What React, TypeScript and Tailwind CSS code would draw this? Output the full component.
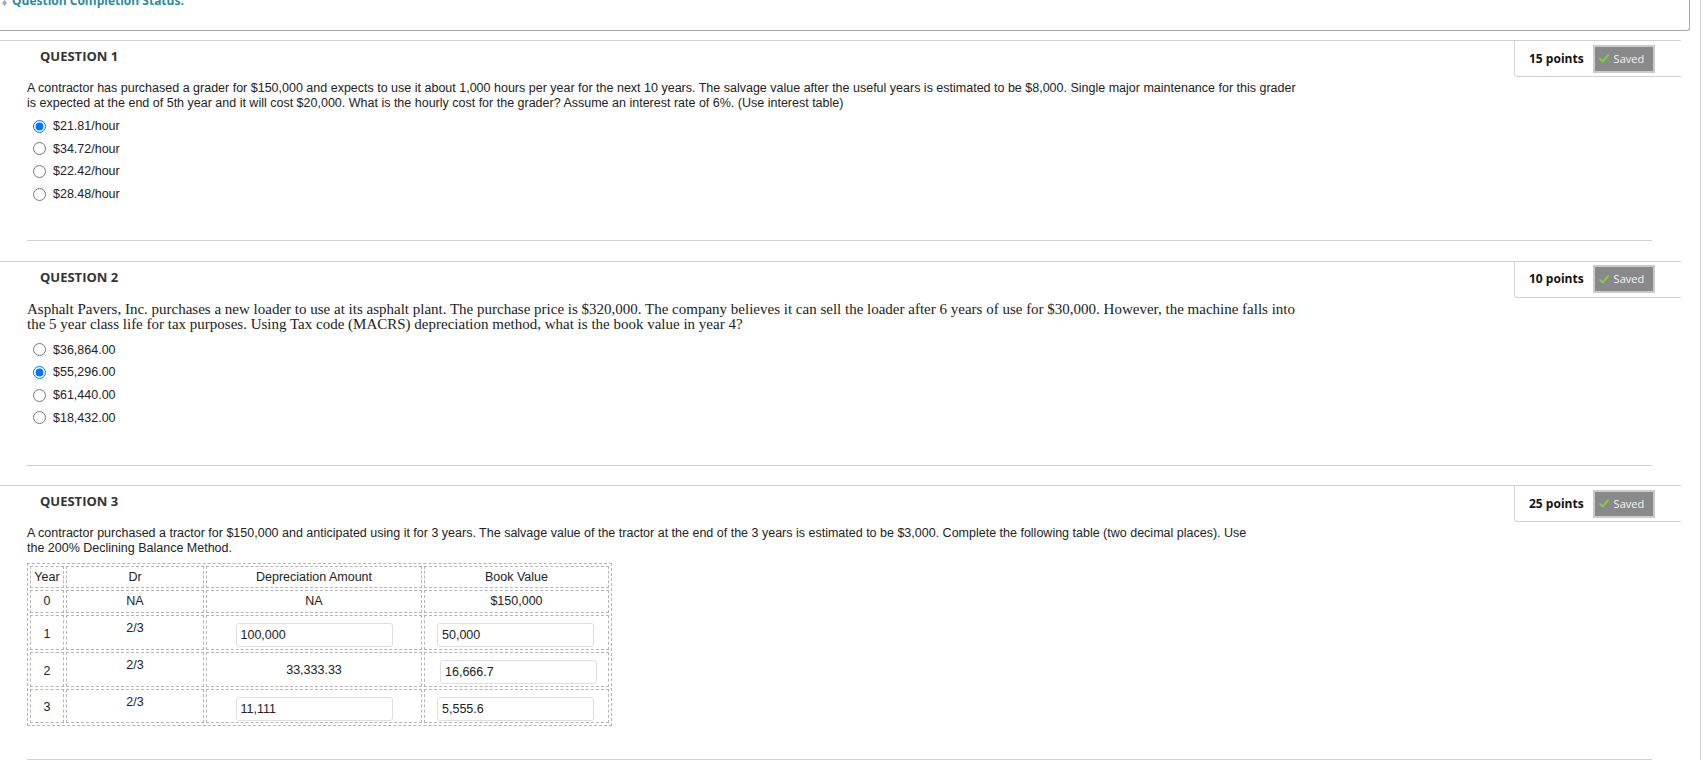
const sans = "font-['Liberation_Sans',Arial,sans-serif]"
const open = "font-['Open_Sans','Liberation_Sans',sans-serif]"

function Check() {
  return (
    <svg width="10" height="9" viewBox="0 0 10 9" className="shrink-0">
      <path d="M1 4.8 L3.8 7.5 L9 1.2" fill="none" stroke="#7ccf3a" strokeWidth="2" strokeLinecap="round" />
    </svg>
  )
}

function QuestionHeader({ n, points }: { n: number; points: number }) {
  return (
    <div className="flex h-[37px] border-t border-[#d2d2d2]">
      <div className={`flex-1 pl-[40px] pt-[7px] text-[13px] font-bold leading-[16px] text-[#333] ${open}`}>
        QUESTION {n}
      </div>
      <div className="flex h-[36px] w-[167px] items-center rounded-bl-[4px] border-b border-l border-[#d2d2d2] pl-[14px]">
        <span className={`text-[12px] font-bold leading-[16px] text-[#111] ${open}`}>{points} points</span>
        <span className="ml-[9px] flex h-[28px] w-[62px] items-center gap-[5px] border-2 border-[#cacaca] bg-[#898989] pl-[4px]">
          <Check />
          <span className={`text-[11px] leading-[14px] text-[#f4f4f4] ${open}`}>Saved</span>
        </span>
      </div>
    </div>
  )
}

function Options({ items, checked }: { items: string[]; checked: number }) {
  return (
    <div className="flex flex-col">
      {items.map((item, i) => (
        <label key={item} className="flex h-[22.67px] items-center text-[12.5px] text-[#222]">
          <input
            type="radio"
            readOnly
            checked={i === checked}
            className="m-0 ml-[6px] mr-[7px] h-[13px] w-[13px] accent-[#0075ff]"
          />
          {item}
        </label>
      ))}
    </div>
  )
}

function Separator({ top }: { top: string }) {
  return <div className={`ml-[27px] w-[1625px] border-t border-[#d2d2d2] ${top}`} />
}

const cell = 'border border-dashed border-[#b4b4b4] p-0 text-center'

function InputBox({ value, className = '' }: { value: string; className?: string }) {
  return (
    <input
      readOnly
      defaultValue={value}
      className={`block h-[24px] w-[157px] rounded-[3px] border border-[#dedede] bg-white px-[4px] text-[12.5px] text-[#222] outline-none ${className}`}
    />
  )
}

function DepTable() {
  const rows = [
    { year: '1', dep: <InputBox value="100,000" className="mx-auto" />, bv: <InputBox value="50,000" className="ml-[12px]" />, h: 'h-[35px]', depText: false },
    { year: '2', dep: '33,333.33', bv: <InputBox value="16,666.7" className="ml-[15px]" />, h: 'h-[35px]', depText: true },
    { year: '3', dep: <InputBox value="11,111" className="mx-auto" />, bv: <InputBox value="5,555.6" className="ml-[12px]" />, h: 'h-[34px]', depText: false },
  ]

  return (
    <table className="table-fixed border-separate border-spacing-[2px] border border-dashed border-[#b4b4b4] text-[12.5px] leading-[15px] text-[#222]">
      <tbody>
        <tr className="h-[22px]">
          <td className={`${cell} w-[34px]`}>Year</td>
          <td className={`${cell} w-[138px]`}>Dr</td>
          <td className={`${cell} w-[216px]`}>Depreciation Amount</td>
          <td className={`${cell} w-[185px]`}>Book Value</td>
        </tr>
        <tr className="h-[23px]">
          <td className={cell}>0</td>
          <td className={cell}>NA</td>
          <td className={cell}>NA</td>
          <td className={cell}>$150,000</td>
        </tr>
        {rows.map((r) => (
          <tr key={r.year} className={r.h}>
            <td className={`${cell} pt-[3px] align-middle`}>{r.year}</td>
            <td className={`${cell} pt-[5px] align-top`}>2/3</td>
            <td className={r.depText ? `${cell} pt-[2px] align-middle` : `${cell} pt-[7px] align-top`}>{r.dep}</td>
            <td className={`${cell} pt-[7px] align-top`}>{r.bv}</td>
          </tr>
        ))}
      </tbody>
    </table>
  )
}

export default function App() {
  return (
    <div className={`flex min-h-[760px] w-[1706px] overflow-hidden bg-white ${sans}`}>
      <div className="min-h-[760px] w-[1701px] shrink-0 border-r border-[#d4d4d4]">
        <div className="flex h-[31px] w-[1690px] items-start rounded-br-[3px] border-b border-r border-[#a5a5a5]">
          <div className={`-mt-[7px] flex items-center gap-[5px] pl-[2px] text-[12px] font-bold leading-[16px] text-[#2b8ba0] ${open}`}>
            <svg width="5" height="6" viewBox="0 0 5 6" className="mt-[4px]">
              <path d="M2.5 0 L5 3 L2.5 6 L0 3 Z" fill="#a8a8a8" />
            </svg>
            <span>Question Completion Status:</span>
          </div>
        </div>

        <div className="mt-[9px] w-[1681px]">
          <QuestionHeader n={1} points={15} />
          <div className="pl-[27px]">
            <p className="mt-[4px] whitespace-nowrap text-[12.5px] leading-[15px] text-[#222]">
              A contractor has purchased a grader for $150,000 and expects to use it about 1,000 hours per year for the next 10 years. The salvage value after the useful years is estimated to be $8,000. Single major maintenance for this grader
              <br />
              is expected at the end of 5th year and it will cost $20,000. What is the hourly cost for the grader? Assume an interest rate of 6%. (Use interest table)
            </p>
            <div className="mt-[4px]">
              <Options items={['$21.81/hour', '$34.72/hour', '$22.42/hour', '$28.48/hour']} checked={0} />
            </div>
          </div>
          <Separator top="mt-[34px]" />

          <div className="mt-[20px]">
            <QuestionHeader n={2} points={10} />
          </div>
          <div className="pl-[27px]">
            <p className="mt-[4px] whitespace-nowrap font-['Liberation_Serif','Times_New_Roman',serif] text-[15px] leading-[15px] text-[#222]">
              Asphalt Pavers, Inc. purchases a new loader to use at its asphalt plant. The purchase price is $320,000. The company believes it can sell the loader after 6 years of use for $30,000. However, the machine falls into
              <br />
              the 5 year class life for tax purposes. Using Tax code (MACRS) depreciation method, what is the book value in year 4?
            </p>
            <div className="mt-[7px]">
              <Options items={['$36,864.00', '$55,296.00', '$61,440.00', '$18,432.00']} checked={1} />
            </div>
          </div>
          <Separator top="mt-[36px]" />

          <div className="mt-[19px]">
            <QuestionHeader n={3} points={25} />
          </div>
          <div className="pl-[27px]">
            <p className="mt-[4px] whitespace-nowrap text-[12.5px] leading-[15px] text-[#222]">
              A contractor purchased a tractor for $150,000 and anticipated using it for 3 years. The salvage value of the tractor at the end of the 3 years is estimated to be $3,000. Complete the following table (two decimal places). Use
              <br />
              the 200% Declining Balance Method.
            </p>
            <div className="mt-[7px]">
              <DepTable />
            </div>
          </div>
          <Separator top="mt-[33px]" />
        </div>
      </div>
    </div>
  )
}
